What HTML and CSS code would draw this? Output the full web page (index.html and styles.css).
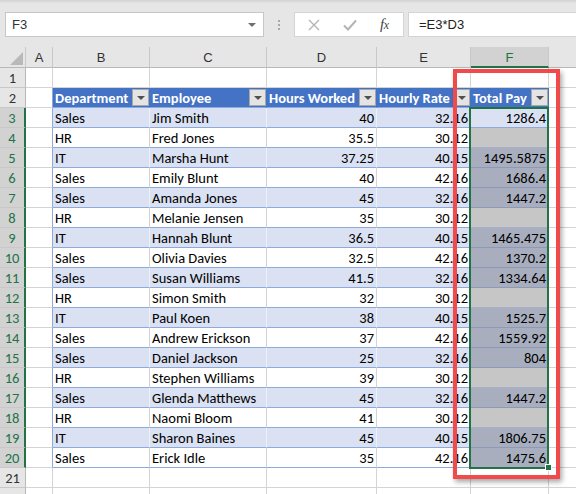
FILE: index.html
```html
<!DOCTYPE html>
<html>
<head>
<meta charset="utf-8">
<link rel="stylesheet" href="styles.css">
</head>
<body>
<div class="toolbar">
  <div class="namebox"><span class="nb-text">F3</span><span class="nb-arrow"></span></div>
  <div class="dots"><i></i><i></i><i></i></div>
  <div class="fxbox">
    <svg class="ic-x" width="12" height="12" viewBox="0 0 12 12"><path d="M1 1L11 11M11 1L1 11" stroke="#b4b4b4" stroke-width="1.4" fill="none"/></svg>
    <svg class="ic-ok" width="14" height="12" viewBox="0 0 14 12"><path d="M1 6.5L5 10.5L13 1.5" stroke="#b4b4b4" stroke-width="2" fill="none"/></svg>
    <span class="fx">f<span class="fx-x">x</span></span>
  </div>
  <div class="formula">=E3*D3</div>
</div>
<div class="sheet">
  <div class="grid">
    <div class="ch corner"><svg width="26" height="21" viewBox="0 0 26 21"><polygon points="10,18 23,18 23,5" fill="#b9b9b9"/></svg></div>
    <div class="ch">A</div><div class="ch">B</div><div class="ch">C</div><div class="ch">D</div><div class="ch">E</div><div class="ch chsel">F</div><div class="ch chlast"></div>

    <div class="rh">1</div><div class="c"></div><div class="c"></div><div class="c"></div><div class="c"></div><div class="c"></div><div class="c"></div><div class="c clast"></div>

    <div class="rh">2</div><div class="c ta"></div>
    <div class="c th"><span>Department</span><span class="fb"></span></div>
    <div class="c th"><span>Employee</span><span class="fb"></span></div>
    <div class="c th"><span>Hours Worked</span><span class="fb"></span></div>
    <div class="c th"><span>Hourly Rate</span><span class="fb"></span></div>
    <div class="c th"><span>Total Pay</span><span class="fb"></span></div>
    <div class="c clast"></div>

    <div class="rh rsel">3</div><div class="c ta"></div><div class="c t b">Sales</div><div class="c t b">Jim Smith</div><div class="c t b n">40</div><div class="c t b n">32.16</div><div class="c t f act n">1286.4</div><div class="c clast"></div>
    <div class="rh rsel">4</div><div class="c ta"></div><div class="c t">HR</div><div class="c t">Fred Jones</div><div class="c t n">35.5</div><div class="c t n">30.12</div><div class="c t f emp"></div><div class="c clast"></div>
    <div class="rh rsel">5</div><div class="c ta"></div><div class="c t b">IT</div><div class="c t b">Marsha Hunt</div><div class="c t b n">37.25</div><div class="c t b n">40.15</div><div class="c t f val n">1495.5875</div><div class="c clast"></div>
    <div class="rh rsel">6</div><div class="c ta"></div><div class="c t">Sales</div><div class="c t">Emily Blunt</div><div class="c t n">40</div><div class="c t n">42.16</div><div class="c t f val n">1686.4</div><div class="c clast"></div>
    <div class="rh rsel">7</div><div class="c ta"></div><div class="c t b">Sales</div><div class="c t b">Amanda Jones</div><div class="c t b n">45</div><div class="c t b n">32.16</div><div class="c t f val n">1447.2</div><div class="c clast"></div>
    <div class="rh rsel">8</div><div class="c ta"></div><div class="c t">HR</div><div class="c t">Melanie Jensen</div><div class="c t n">35</div><div class="c t n">30.12</div><div class="c t f emp"></div><div class="c clast"></div>
    <div class="rh rsel">9</div><div class="c ta"></div><div class="c t b">IT</div><div class="c t b">Hannah Blunt</div><div class="c t b n">36.5</div><div class="c t b n">40.15</div><div class="c t f val n">1465.475</div><div class="c clast"></div>
    <div class="rh rsel">10</div><div class="c ta"></div><div class="c t">Sales</div><div class="c t">Olivia Davies</div><div class="c t n">32.5</div><div class="c t n">42.16</div><div class="c t f val n">1370.2</div><div class="c clast"></div>
    <div class="rh rsel">11</div><div class="c ta"></div><div class="c t b">Sales</div><div class="c t b">Susan Williams</div><div class="c t b n">41.5</div><div class="c t b n">32.16</div><div class="c t f val n">1334.64</div><div class="c clast"></div>
    <div class="rh rsel">12</div><div class="c ta"></div><div class="c t">HR</div><div class="c t">Simon Smith</div><div class="c t n">32</div><div class="c t n">30.12</div><div class="c t f emp"></div><div class="c clast"></div>
    <div class="rh rsel">13</div><div class="c ta"></div><div class="c t b">IT</div><div class="c t b">Paul Koen</div><div class="c t b n">38</div><div class="c t b n">40.15</div><div class="c t f val n">1525.7</div><div class="c clast"></div>
    <div class="rh rsel">14</div><div class="c ta"></div><div class="c t">Sales</div><div class="c t">Andrew Erickson</div><div class="c t n">37</div><div class="c t n">42.16</div><div class="c t f val n">1559.92</div><div class="c clast"></div>
    <div class="rh rsel">15</div><div class="c ta"></div><div class="c t b">Sales</div><div class="c t b">Daniel Jackson</div><div class="c t b n">25</div><div class="c t b n">32.16</div><div class="c t f val n">804</div><div class="c clast"></div>
    <div class="rh rsel">16</div><div class="c ta"></div><div class="c t">HR</div><div class="c t">Stephen Williams</div><div class="c t n">39</div><div class="c t n">30.12</div><div class="c t f emp"></div><div class="c clast"></div>
    <div class="rh rsel">17</div><div class="c ta"></div><div class="c t b">Sales</div><div class="c t b">Glenda Matthews</div><div class="c t b n">45</div><div class="c t b n">32.16</div><div class="c t f val n">1447.2</div><div class="c clast"></div>
    <div class="rh rsel">18</div><div class="c ta"></div><div class="c t">HR</div><div class="c t">Naomi Bloom</div><div class="c t n">41</div><div class="c t n">30.12</div><div class="c t f emp"></div><div class="c clast"></div>
    <div class="rh rsel">19</div><div class="c ta"></div><div class="c t b">IT</div><div class="c t b">Sharon Baines</div><div class="c t b n">45</div><div class="c t b n">40.15</div><div class="c t f val n">1806.75</div><div class="c clast"></div>
    <div class="rh rsel">20</div><div class="c ta"></div><div class="c t">Sales</div><div class="c t">Erick Idle</div><div class="c t n">35</div><div class="c t n">42.16</div><div class="c t f val n">1475.6</div><div class="c clast"></div>

    <div class="rh">21</div><div class="c"></div><div class="c"></div><div class="c"></div><div class="c"></div><div class="c"></div><div class="c"></div><div class="c clast"></div>
    <div class="rh"></div><div class="c"></div><div class="c"></div><div class="c"></div><div class="c"></div><div class="c"></div><div class="c"></div><div class="c clast"></div>
  </div>
  <div class="selection"></div>
  <div class="handle"></div>
  <div class="highlight"></div>
</div>
</body>
</html>
```

FILE: styles.css
```css
* { box-sizing: border-box; }
html, body { margin: 0; padding: 0; }
body {
  width: 576px;
  height: 494px;
  overflow: hidden;
  background: #ffffff;
  font-family: Carlito, Lato, "Liberation Sans", sans-serif;
}

.toolbar {
  height: 47px;
  background: linear-gradient(#d2d2d2 0, #dedede 2px, #e6e6e6 4px, #e6e6e6 100%);
  display: flex;
  align-items: flex-start;
  padding-top: 12px;
  white-space: nowrap;
}
.namebox {
  margin-left: 5px;
  width: 259px;
  height: 25px;
  background: #fff;
  border: 1px solid #c6c6c6;
  display: flex;
  align-items: center;
  justify-content: space-between;
  padding: 0 7px 0 6px;
  font-family: "Liberation Sans", sans-serif;
  font-size: 13px;
  color: #333;
}
.nb-arrow {
  width: 0; height: 0;
  border-left: 4px solid transparent;
  border-right: 4px solid transparent;
  border-top: 4px solid #6e6e6e;
  margin-top: 1px;
}
.dots {
  width: 30px;
  height: 25px;
  display: flex;
  flex-direction: column;
  align-items: center;
  justify-content: center;
  gap: 2px;
}
.dots i {
  width: 2px; height: 2px;
  background: #a8a8a8;
  display: block;
}
.fxbox {
  width: 110px;
  height: 25px;
  background: #fff;
  border: 1px solid #d4d4d4;
  display: flex;
  align-items: center;
  padding-left: 13px;
}
.ic-ok { margin-left: 23px; }
.fx {
  margin-left: 23px;
  font-family: "Liberation Serif", serif;
  font-style: italic;
  font-size: 15px;
  color: #444;
  letter-spacing: -0.5px;
}
.fx-x { font-size: 12px; }
.formula {
  margin-left: 4px;
  flex: 1;
  height: 25px;
  background: #fff;
  border: 1px solid #d4d4d4;
  border-right: none;
  padding-left: 10px;
  font-family: "Liberation Sans", sans-serif;
  font-size: 13px;
  line-height: 23px;
  color: #222;
}

.sheet { position: relative; }
.grid {
  display: grid;
  grid-template-columns: 26px 27px 97px 117px 110px 94px 78px 1fr;
  grid-template-rows: 21px;
  grid-auto-rows: 20px;
}
.ch {
  background: #e6e6e6;
  border-right: 1px solid #c8c8c8;
  border-bottom: 1px solid #b8b8b8;
  font-family: "Liberation Sans", sans-serif;
  font-size: 13px;
  color: #333;
  display: flex;
  align-items: center;
  justify-content: center;
  padding-top: 1px;
}
.ch.corner { padding: 0; display: block; }
.ch.corner svg { display: block; }
.ch.chsel {
  background: #d2d2d2;
  border-bottom: 2px solid #217346;
  color: #217346;
}
.ch.chlast { border-right: none; }

.rh {
  background: #e6e6e6;
  border-right: 1px solid #b8b8b8;
  border-bottom: 1px solid #c8c8c8;
  font-size: 14.5px;
  color: #333;
  display: flex;
  align-items: center;
  justify-content: center;
  padding-top: 1px;
}
.rh.rsel {
  background: #d2d2d2;
  color: #217346;
  border-right: 2px solid #217346;
}

.c {
  border-right: 1px solid #d4d4d4;
  border-bottom: 1px solid #d4d4d4;
  font-size: 14.5px;
  color: #000;
  padding: 1px 2px 0 2px;
  line-height: 18px;
  white-space: nowrap;
  overflow: visible;
}
.c.clast { border-right: none; }
.c.ta { border-right-color: #8ea9db; }
.c.t { border-bottom-color: #8ea9db; }
.c.t.b { background: #d9e1f2; border-right-color: #eef1f8; }
.c.n { text-align: right; }
.c.th {
  background: #4472c4;
  border-right-color: #4472c4;
  border-bottom-color: #8ea9db;
  color: #fff;
  font-weight: bold;
  display: flex;
  align-items: center;
  justify-content: space-between;
  padding: 0 0 0 2px;
}
.c.th span:first-child { padding-top: 1px; }
.fb {
  width: 17px;
  height: 17px;
  background: #e4e4e4;
  border: 1px solid #a8a8a8;
  display: flex;
  align-items: center;
  justify-content: center;
}
.fb::after {
  content: "";
  width: 0; height: 0;
  border-left: 4px solid transparent;
  border-right: 4px solid transparent;
  border-top: 4px solid #505050;
}
.c.f { border-right-color: #8ea9db; }
.c.f.act { background: #d9e1f2; }
.c.f.emp { background: #c6c6c6; border-bottom-color: #a7b2c9; }
.c.f.val { background: #a8aebd; border-bottom-color: #8c9ab8; }

.selection {
  position: absolute;
  left: 469px;
  top: 60px;
  width: 80px;
  height: 362px;
  border: 2px solid #217346;
  pointer-events: none;
}
.handle {
  position: absolute;
  left: 545px;
  top: 417px;
  width: 7px;
  height: 7px;
  background: #217346;
  border: 1px solid #fff;
}
.highlight {
  position: absolute;
  left: 453px;
  top: 22px;
  width: 107px;
  height: 410px;
  border: 4px solid #f04a4a;
  box-shadow: 2px 3px 5px rgba(0, 0, 0, 0.35);
  pointer-events: none;
}
```
